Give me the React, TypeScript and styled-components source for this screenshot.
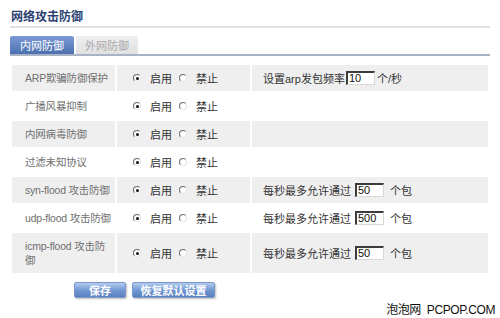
import styled, { createGlobalStyle } from 'styled-components';

const GlobalStyle = createGlobalStyle`
  html, body {
    margin: 0;
    padding: 0;
    background: #ffffff;
  }
  body {
    font-family: "Liberation Sans", "Noto Sans CJK SC", sans-serif;
    font-size: 11px;
    color: #333;
  }
`;

type Rule = {
  label: string;
  on: boolean;
  extra?: { before: string; value: string; after: string; tight?: boolean };
  tall?: boolean;
};

// the icmp label breaks the same way the original page does
const rules: Rule[] = [
  { label: 'ARP欺骗防御保护', on: true, extra: { before: '设置arp发包频率', value: '10', after: '个/秒', tight: true } },
  { label: '广播风暴抑制', on: true },
  { label: '内网病毒防御', on: true },
  { label: '过滤未知协议', on: true },
  { label: 'syn-flood 攻击防御', on: true, extra: { before: '每秒最多允许通过', value: '50', after: '个包' } },
  { label: 'udp-flood 攻击防御', on: true, extra: { before: '每秒最多允许通过', value: '500', after: '个包' } },
  { label: 'icmp-flood 攻击防\n御', on: true, extra: { before: '每秒最多允许通过', value: '50', after: '个包' }, tall: true },
];

export default function App() {
  return (
    <Page>
      <GlobalStyle />
      <Title>网络攻击防御</Title>

      <Tabs>
        <Tab $active>内网防御</Tab>
        <Tab>外网防御</Tab>
      </Tabs>

      <Table>
        <colgroup>
          <col style={{ width: 103 }} />
          <col style={{ width: 133 }} />
          <col style={{ width: 236 }} />
        </colgroup>
        <tbody>
          {rules.map((r, i) => (
            <Row key={r.label} $shaded={i % 2 === 0} $tall={r.tall}>
              <LabelCell>{r.label}</LabelCell>
              <td>
                <Choice>
                  <Radio $checked={r.on} />
                  <span>启用</span>
                  <Radio $checked={!r.on} />
                  <span>禁止</span>
                </Choice>
              </td>
              <td>
                {r.extra && (
                  <Extra $tight={r.extra.tight}>
                    <span>{r.extra.before}</span>
                    <NumBox>{r.extra.value}</NumBox>
                    <span>{r.extra.after}</span>
                  </Extra>
                )}
              </td>
            </Row>
          ))}
        </tbody>
      </Table>

      <Actions>
        <Button $width={52}>保存</Button>
        <Button $width={83}>恢复默认设置</Button>
      </Actions>

      <Watermark>泡泡网&nbsp; PCPOP.COM</Watermark>
    </Page>
  );
}

const Page = styled.div`
  position: relative;
  width: 500px;
  height: 318px;
  padding: 0 10px;
  box-sizing: border-box;
  overflow: hidden;
`;

const Title = styled.h1`
  margin: 0;
  height: 28px;
  box-sizing: border-box;
  padding: 10px 0 0 1px;
  font-size: 12px;
  line-height: 14px;
  font-weight: 700;
  color: #2c3f72;
  border-bottom: 2px solid #e0e0e0;
`;

const Tabs = styled.div`
  display: flex;
  gap: 2px;
  margin-top: 8px;
  height: 18px;
  border-bottom: 2px solid #a9b3c5;
`;

const Tab = styled.div<{ $active?: boolean }>`
  width: ${(p) => (p.$active ? 64 : 62)}px;
  display: flex;
  align-items: center;
  justify-content: center;
  font-size: 11px;
  border-radius: 2px 2px 0 0;
  color: ${(p) => (p.$active ? '#ffffff' : '#a9a9a9')};
  background: ${(p) =>
    p.$active
      ? 'linear-gradient(#7b9bd6, #4c70b0)'
      : 'linear-gradient(#f0eff0, #e2e1e2)'};
`;

const Table = styled.table`
  margin-top: 7px;
  width: 480px;
  table-layout: fixed;
  border-collapse: separate;
  border-spacing: 2px;
  td {
    padding: 0;
    vertical-align: middle;
  }
`;

const Row = styled.tr<{ $shaded: boolean; $tall?: boolean }>`
  height: ${(p) => (p.$tall ? 40 : 26)}px;
  td {
    background: ${(p) => (p.$shaded ? '#efefef' : '#ffffff')};
  }
`;

const LabelCell = styled.td`
  && {
    padding: 0 0 0 13px;
  }
  color: #707070;
  font-size: 10.5px;
  line-height: 14px;
  white-space: pre;
  letter-spacing: -0.2px;
`;

const Choice = styled.div`
  display: flex;
  align-items: center;
  padding-left: 16px;
  color: #333;
  span {
    margin: 0 7px 0 9px;
  }
`;

const Radio = styled.i<{ $checked: boolean }>`
  display: inline-block;
  position: relative;
  width: 8px;
  height: 8px;
  box-sizing: border-box;
  border-radius: 50%;
  border: 1px solid;
  border-color: #6a6a6a #e4e4e4 #e4e4e4 #6a6a6a;
  background: #ffffff;
  &::after {
    content: '';
    display: ${(p) => (p.$checked ? 'block' : 'none')};
    position: absolute;
    left: 1.5px;
    top: 1.5px;
    width: 3px;
    height: 3px;
    border-radius: 50%;
    background: #111;
  }
`;

const Extra = styled.div<{ $tight?: boolean }>`
  display: flex;
  align-items: center;
  padding-left: 11px;
  color: #333;
  gap: ${(p) => (p.$tight ? 1 : 4)}px;
  span:last-child {
    margin-left: ${(p) => (p.$tight ? 1 : 2)}px;
  }
`;

const NumBox = styled.div`
  width: 29px;
  height: 14px;
  box-sizing: border-box;
  background: #ffffff;
  border: 1px solid;
  border-width: 2px 1px 1px 2px;
  border-color: #3c3c3c #d8d8d8 #d8d8d8 #3c3c3c;
  font-family: "Liberation Sans", Arial, sans-serif;
  font-size: 11px;
  line-height: 11px;
  padding-left: 1px;
  color: #111;
`;

const Actions = styled.div`
  display: flex;
  gap: 6px;
  margin-top: 7px;
  padding-left: 64px;
`;

const Button = styled.button<{ $width: number }>`
  width: ${(p) => p.$width}px;
  height: 16px;
  padding: 0;
  border: 1px solid #7b98c8;
  border-radius: 2px;
  background: linear-gradient(#b3cbef, #6f95d2 55%, #5a80c0);
  box-shadow: 1px 1px 2px rgba(0, 0, 0, 0.25);
  color: #ffffff;
  font-family: "Noto Sans CJK SC", sans-serif;
  font-size: 11px;
  font-weight: 700;
  line-height: 14px;
`;

const Watermark = styled.div`
  position: absolute;
  right: 5px;
  bottom: 1px;
  font-size: 12px;
  line-height: 14px;
  color: #111;
  letter-spacing: -0.4px;
`;
